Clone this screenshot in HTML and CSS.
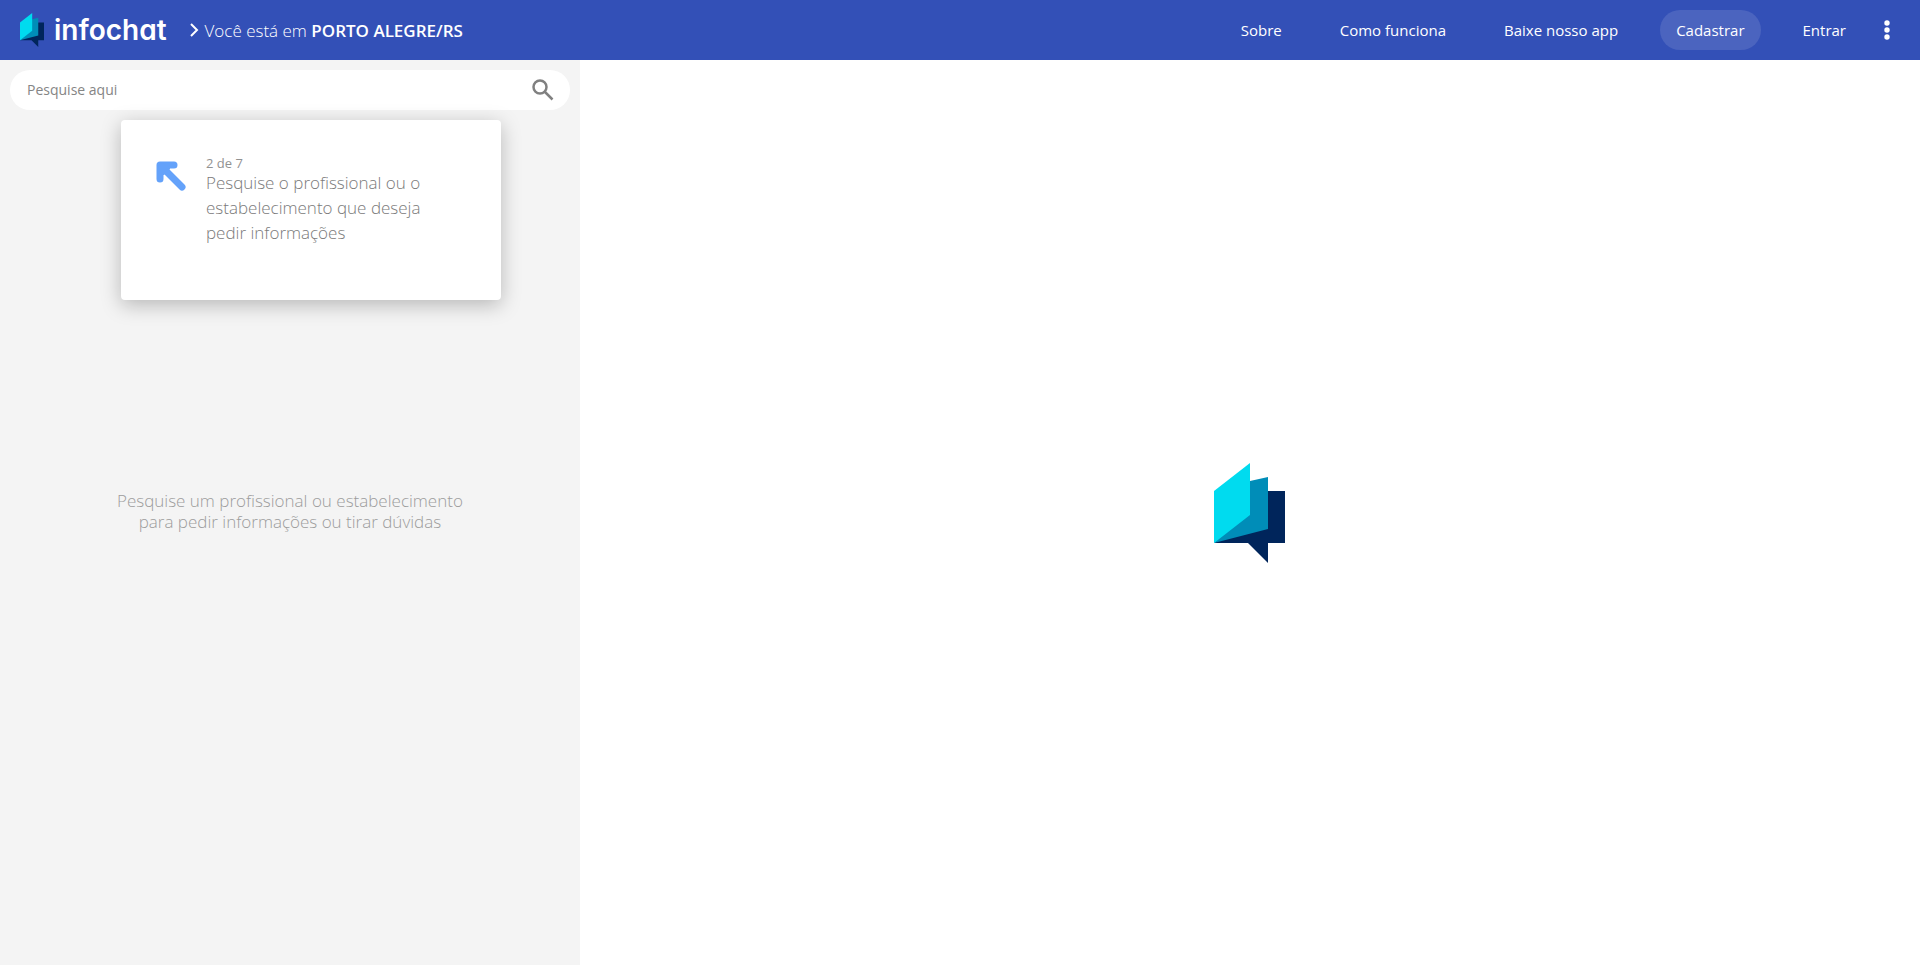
FILE: index.html
```html
<!DOCTYPE html>
<html lang="pt-BR">
<head>
<meta charset="utf-8">
<title>Infochat</title>
<meta name="viewport" content="width=device-width, initial-scale=1">
<link rel="stylesheet" href="styles.css">
</head>
<body>
<svg class="defs" aria-hidden="true">
  <symbol id="mark" viewBox="0 0 71 100">
    <path fill="#00255b" d="M54 28H71V80H54V100L34 80H0L36 60Z"/>
    <path fill="#008db8" d="M36 18L54 14V66L0 80L30 40Z"/>
    <path fill="#00dbef" d="M0 28L36 0V52L0 80Z"/>
  </symbol>
</svg>
<header class="topbar">
  <a class="brand" href="#" aria-label="infochat">
    <svg class="brand-mark" aria-hidden="true"><use href="#mark"/></svg>
    <span class="brand-name">infochat</span>
  </a>
  <a class="location" href="#">
    <svg class="chevron" viewBox="0 0 10 16" aria-hidden="true"><path d="M2 2L8 8L2 14"/></svg>
    <span>Você está em <strong>PORTO ALEGRE/RS</strong></span>
  </a>
  <nav class="nav">
    <a class="nav-link" href="#">Sobre</a>
    <a class="nav-link" href="#">Como funciona</a>
    <a class="nav-link" href="#">Baixe nosso app</a>
    <a class="nav-link nav-link-filled" href="#">Cadastrar</a>
    <a class="nav-link" href="#">Entrar</a>
  </nav>
  <button class="more" type="button" aria-label="Mais opções">
    <svg viewBox="0 0 6 20" aria-hidden="true"><circle cx="3" cy="3" r="2.7"/><circle cx="3" cy="10" r="2.7"/><circle cx="3" cy="17" r="2.7"/></svg>
  </button>
</header>
<main class="layout">
  <aside class="sidebar">
    <form class="search">
      <input class="search-input" type="text" placeholder="Pesquise aqui" aria-label="Pesquise aqui">
      <button class="search-button" type="button" aria-label="Pesquisar">
        <svg viewBox="0 0 22 22" aria-hidden="true"><circle cx="8" cy="8" r="6.5"/><path d="M13 13L20.500 20.500"/></svg>
      </button>
    </form>
    <section class="tip">
      <svg class="tip-arrow" viewBox="0 0 30 30" aria-hidden="true"><path class="arrow-head" d="M4 4H18M4 4V18"/><path class="arrow-fill" d="M4 4H14V8L8 14H4Z"/><path class="arrow-stem" d="M6 6L26 26"/></svg>
      <div class="tip-body">
        <p class="tip-step">2 de 7</p>
        <p class="tip-text">Pesquise o profissional ou o estabelecimento que deseja pedir informações</p>
      </div>
    </section>
    <p class="empty">Pesquise um profissional ou estabelecimento para pedir informações ou tirar dúvidas</p>
  </aside>
  <section class="content">
    <svg class="content-mark" role="img" aria-label="Infochat"><use href="#mark"/></svg>
  </section>
</main>
</body>
</html>
```
FILE: styles.css
```css
* { box-sizing: border-box; }

body {
  margin: 0;
  min-height: 100vh;
  display: flex;
  flex-direction: column;
  background: #fff;
  font-family: "Open Sans", "Noto Sans", sans-serif;
}

p { margin: 0; }
a { color: inherit; text-decoration: none; }
button { border: 0; padding: 0; background: none; cursor: pointer; }
.defs { position: absolute; width: 0; height: 0; }

.topbar {
  display: flex;
  align-items: center;
  height: 60px;
  padding: 0 20px;
  background: #3350b7;
  color: #fff;
}

.brand { display: flex; align-items: center; gap: 10px; }
.brand-mark { width: 24px; height: 34px; }
.brand-name {
  font-family: Inter, sans-serif;
  font-size: 28px;
  font-weight: 600;
  font-feature-settings: "cv11";
  line-height: 34px;
}

.location {
  display: flex;
  align-items: center;
  gap: 6px;
  margin-left: 22px;
  font-size: 17px;
  font-weight: 300;
}
.location strong { font-weight: 600; }
.chevron { width: 10px; height: 16px; fill: none; stroke: #fff; stroke-width: 2; }

.nav { display: flex; gap: 26px; margin-left: auto; }
.nav-link {
  padding: 0 16px;
  border-radius: 20px;
  font-size: 15px;
  line-height: 40px;
}
.nav-link-filled { background: #4b64bf; }

.more { width: 20px; height: 40px; margin: 0 3px 0 15px; }
.more svg { display: block; width: 6px; height: 20px; margin: 0 auto; fill: #fff; }

.layout { flex: 1; display: flex; }

.sidebar {
  position: relative;
  display: flex;
  flex-direction: column;
  width: 30.2%;
  padding: 10px;
  background: #f4f4f4;
}

.search {
  display: flex;
  align-items: center;
  height: 40px;
  padding: 0 16px 0 17px;
  border-radius: 20px;
  background: #fff;
}
.search-input {
  flex: 1;
  min-width: 0;
  padding: 0 0 2px;
  border: 0;
  outline: 0;
  background: none;
  font: 14px "Open Sans", "Noto Sans", sans-serif;
  color: #444;
}
.search-input::placeholder { color: #858585; opacity: 1; }
.search-button { width: 22px; height: 22px; }
.search-button svg {
  display: block;
  width: 22px;
  height: 22px;
  fill: none;
  stroke: #808080;
  stroke-width: 2.500;
}

.tip {
  position: absolute;
  top: 60px;
  left: 121px;
  display: flex;
  gap: 20px;
  width: 380px;
  min-height: 180px;
  padding: 37px 35px;
  border-radius: 4px;
  background: #fff;
  box-shadow: 0 5px 20px rgba(0, 0, 0, 0.25);
  color: #7a7a7a;
}
.tip-arrow { flex: none; width: 30px; height: 30px; margin-top: 4px; stroke: #64a2fa; fill: none; }
.arrow-head { stroke-width: 7; stroke-linecap: round; stroke-linejoin: round; }
.arrow-stem { stroke-width: 7; stroke-linecap: round; }
.arrow-fill { fill: #64a2fa; stroke: none; }
.tip-body { width: 230px; }
.tip-step { color: #929292; font-size: 13px; line-height: 13px; }
.tip-text { font-size: 17px; font-weight: 300; line-height: 25px; }

.empty {
  width: 360px;
  margin: auto;
  padding-bottom: 44px;
  color: #9c9c9c;
  font-size: 17px;
  font-weight: 300;
  line-height: 21px;
  text-align: center;
}

.content { flex: 1; display: flex; align-items: center; justify-content: center; }
.content-mark { width: 71px; height: 100px; }
```
